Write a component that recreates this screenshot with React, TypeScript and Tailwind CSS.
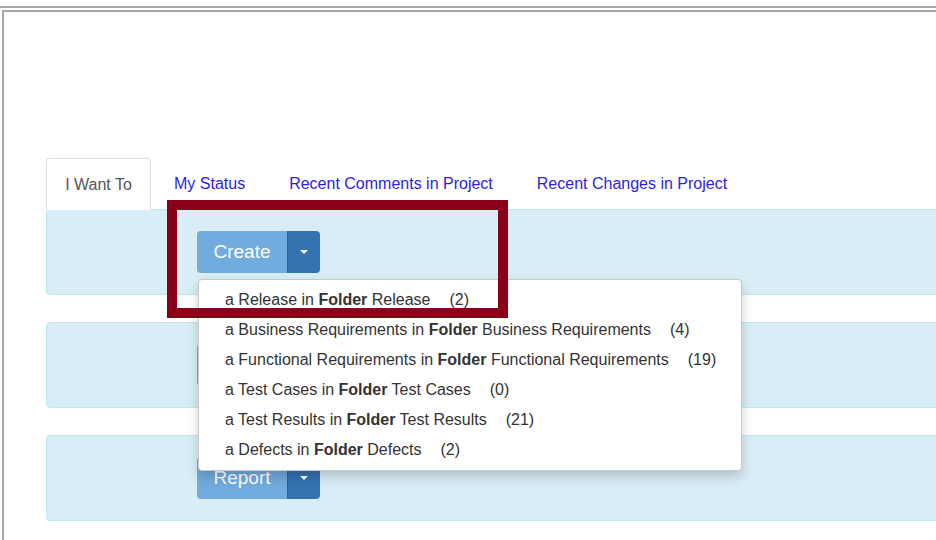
import React from "react";

const items: { pre: string; post: string; count: string }[] = [
  { pre: "a Release in ", post: " Release", count: "(2)" },
  { pre: "a Business Requirements in ", post: " Business Requirements", count: "(4)" },
  { pre: "a Functional Requirements in ", post: " Functional Requirements", count: "(19)" },
  { pre: "a Test Cases in ", post: " Test Cases", count: "(0)" },
  { pre: "a Test Results in ", post: " Test Results", count: "(21)" },
  { pre: "a Defects in ", post: " Defects", count: "(2)" },
];

function SplitButton({ label }: { label: string }) {
  return (
    <div className="flex h-[42px] w-[123px] ml-[150px] mt-[21px]">
      <div className="w-[90px] h-full bg-[#72abdd] rounded-l-[4px] flex items-center justify-center text-white text-[19px]">
        {label}
      </div>
      <div className="w-[33px] h-full bg-[#3472b0] rounded-r-[4px] border-l border-[#2d64a0] flex items-center justify-center">
        <div className="w-0 h-0 border-l-[4px] border-r-[4px] border-t-[4px] border-l-transparent border-r-transparent border-t-white" />
      </div>
    </div>
  );
}

function Panel({ label }: { label: string }) {
  return (
    <div className="h-[86px] bg-[#d9edf7] border border-[#bce8f1] rounded-[4px] mr-[-8px]">
      <SplitButton label={label} />
    </div>
  );
}

export default function App() {
  return (
    <div
      className="relative w-[936px] h-[540px] overflow-hidden bg-white"
      style={{ fontFamily: '"Liberation Sans", Arial, sans-serif' }}
    >
      <div className="pt-[6px]">
        <div className="h-[2px] bg-[#a6a6a6]" />
        <div className="mt-[2px] ml-[2px] border-l-2 border-t-2 border-[#a6a6a6] h-[530px]">
          <div className="pl-[42px] pt-[146px]">
            {/* Tabs */}
            <div className="flex items-end text-[16px] h-[51px]">
              <div className="w-[105px] h-[52px] flex items-center justify-center border border-b-0 border-[#dddddd] rounded-t-[4px] bg-white text-[#555555] relative z-10 mb-[-1px]">
                I Want To
              </div>
              <div className="ml-[2px] h-[51px] px-[21px] flex items-center text-[#2d1ee0]">My Status</div>
              <div className="ml-[2px] h-[51px] px-[21px] flex items-center text-[#2d1ee0]">Recent Comments in Project</div>
              <div className="ml-[2px] h-[51px] px-[21px] flex items-center text-[#2d1ee0]">Recent Changes in Project</div>
            </div>
            <div className="flex flex-col gap-[27px]">
              <Panel label="Create" />
              <Panel label="" />
              <Panel label="Report" />
            </div>
          </div>
        </div>
      </div>

      {/* Dropdown menu */}
      <div className="absolute left-[198px] top-[279px] w-[544px] h-[192px] bg-white border border-[#c8c8c8] rounded-[4px] shadow-[0_6px_12px_rgba(0,0,0,0.18)] pt-[5px] z-20">
        {items.map((it, i) => (
          <div key={i} className="h-[30px] pl-[26px] flex items-center text-[16px] text-[#333333] whitespace-pre">
            <span>{it.pre}</span>
            <span className="font-bold">Folder</span>
            <span>{it.post}</span>
            <span className="ml-[19px]">{it.count}</span>
          </div>
        ))}
      </div>

      {/* Red highlight */}
      <div className="absolute left-[167px] top-[200px] w-[341px] h-[118px] border-[10px] border-[#8a0019] z-30" />
    </div>
  );
}
